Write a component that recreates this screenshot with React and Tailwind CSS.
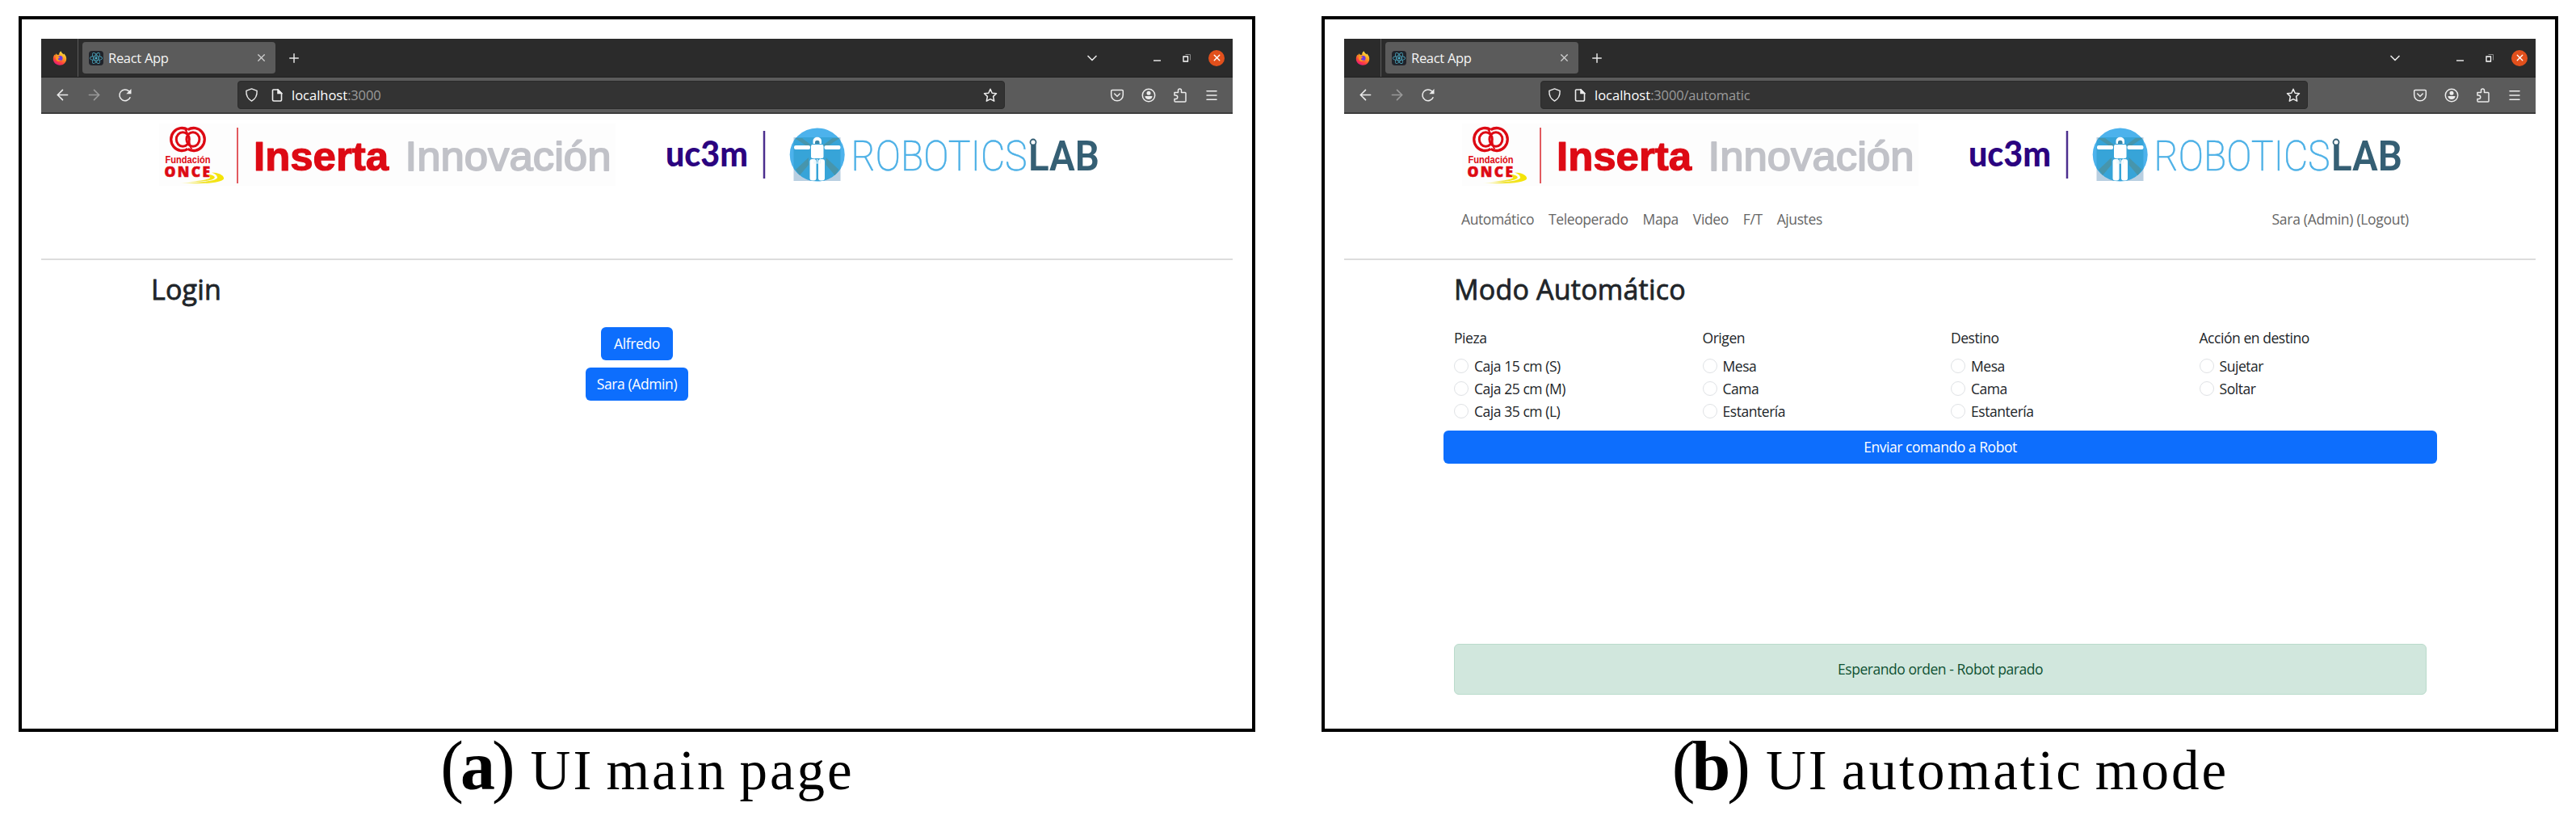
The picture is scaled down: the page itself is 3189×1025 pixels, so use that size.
import { FaReact } from 'react-icons/fa';
import { Menu, Plus, X, ChevronDown, ArrowLeft, ArrowRight } from 'lucide-react';

const navItems = ['Automático', 'Teleoperado', 'Mapa', 'Video', 'F/T', 'Ajustes'];

const commandGroups = [
  { title: 'Pieza', name: 'piece', options: ['Caja 15 cm (S)', 'Caja 25 cm (M)', 'Caja 35 cm (L)'] },
  { title: 'Origen', name: 'origin', options: ['Mesa', 'Cama', 'Estantería'] },
  { title: 'Destino', name: 'target', options: ['Mesa', 'Cama', 'Estantería'] },
  { title: 'Acción en destino', name: 'action', options: ['Sujetar', 'Soltar'] },
];

function FirefoxIcon({ id }) {
  return (
    <svg viewBox="0 0 18 18" className="w-[18px] h-[18px]">
      <defs>
        <linearGradient id={id} x1="0.8" y1="0" x2="0.3" y2="1">
          <stop offset="0" stopColor="#fff04a" />
          <stop offset="0.45" stopColor="#ff9a1f" />
          <stop offset="0.75" stopColor="#ff4040" />
          <stop offset="1" stopColor="#e3177f" />
        </linearGradient>
      </defs>
      <path
        d="M10.4 0.3c.4 1.8 2.3 2.7 3.2 4.3l.4-1.3c2 1.8 3.2 3.8 3.2 6.4 0 4.6-3.6 8-8.2 8S.8 14.3.8 9.8c0-2.3.9-4 1.7-5.4l.6 1.3c.5-1.3 1-1.9 1.7-2.4l.6 1.5c1.2-.2 2-.1 2.8.3C8 3.2 8.8 1.3 10.4.3z"
        fill={`url(#${id})`}
      />
      <circle cx="9.5" cy="9" r="3.1" fill="#6b3be0" />
      <path d="M4.5 7.2c1.600-.7 3 .1 4.600.6-.3 1.200-1.800 1.200-2.300 2.200.4 1.500 2 1.900 3.700 1.200-1 2-4.300 2.500-5.600.3-.9-1.500-.9-3-.4-4.300z" fill="#ff9a1f" />
    </svg>
  );
}

function TabBar({ id }) {
  return (
    <div className="flex items-center h-12 bg-[#2b2b2b] border-b border-[#202020] text-[#e6e6e6]">
      <div className="flex items-center justify-center w-[46px] h-full shrink-0 border-r border-[#5a5a5a]">
        <FirefoxIcon id={id} />
      </div>
      <div className="flex items-center ml-[5px] w-[239px] h-[39px] rounded bg-[#5b5b5b] pl-2 pr-[10px]">
        <span className="flex items-center justify-center w-[18px] h-[18px] rounded-sm bg-[#20232a]">
          <FaReact className="w-4 h-4 text-[#4fb3cc]" />
        </span>
        <span className="ml-[6px] mt-px text-[16.5px] leading-6 tracking-[-0.3px] text-[#f5f5f5]">React App</span>
        <X className="ml-auto w-[15px] h-[15px] text-[#d0d0d0]" strokeWidth={2} />
      </div>
      <Plus className="ml-[14px] w-[18px] h-[18px]" strokeWidth={2} />
      <div className="flex items-center ml-auto pr-[10px]">
        <ChevronDown className="w-5 h-5" strokeWidth={2} />
        <span className="ml-[66px] mt-[6px] w-[9px] h-[2px] bg-[#b5b5b5]" />
        <svg viewBox="0 0 10 10" className="ml-[27px] mt-[1px] w-[10px] h-[10px]" fill="none">
          <path d="M3.5.5H9.5V7.5" stroke="#8a8a8a" />
          <path d="M1 3h5.5v6H1z" stroke="#fff" strokeWidth="1.3" />
        </svg>
        <span className="flex items-center justify-center ml-[22px] w-5 h-5 rounded-full bg-[#e2501c]">
          <X className="w-[13px] h-[13px] text-white" strokeWidth={2.5} />
        </span>
      </div>
    </div>
  );
}

function AddressBar({ path }) {
  return (
    <div className="flex items-center h-[45px] bg-[#5b5b5b] border-b-2 border-b-[#3c3c3c] text-[#ececec]">
      <ArrowLeft className="ml-4 w-[21px] h-[21px] shrink-0" strokeWidth={1.8} />
      <ArrowRight className="ml-[18px] w-[21px] h-[21px] shrink-0 text-[#9a9a9a]" strokeWidth={1.8} />
      <svg viewBox="0 0 18 18" className="ml-[19px] w-[18px] h-[18px] shrink-0" fill="none" stroke="currentColor" strokeWidth="1.5">
        <path d="M15.3 11.2A6.9 6.9 0 1 1 13.8 4" />
        <path d="M16.5 1v6.2h-6.2z" fill="currentColor" stroke="none" />
      </svg>
      <div className="flex items-center ml-[130px] w-[950px] h-[35px] rounded bg-[#333333] border border-[#2b2b2b] px-[8px]">
        <svg viewBox="0 0 18 18" className="w-[17px] h-[17px]" fill="none" stroke="currentColor" strokeWidth="1.5">
          <path d="M9 1 16 3.6C16.3 9.5 13.8 14.5 9 17 4.2 14.5 1.7 9.5 2 3.6z" strokeLinejoin="round" />
        </svg>
        <svg viewBox="0 0 14 16" className="ml-4 w-[14px] h-[16px]" fill="none" stroke="currentColor" strokeWidth="1.6">
          <path d="M2.5 1H8l4.5 4.5V13.5a1.5 1.5 0 0 1-1.5 1.5H3A1.5 1.5 0 0 1 1.5 13.5V2a1 1 0 0 1 1-1z" />
          <path d="M8 1v4.5h4.5z" fill="currentColor" />
        </svg>
        <span className="ml-[11px] text-[16.5px] leading-6 text-white">
          localhost<span className="text-[#9b9b9b] tracking-[-0.15px]">{path}</span>
        </span>
        <svg viewBox="0 0 18 18" className="ml-auto w-[18px] h-[18px]" fill="none" stroke="currentColor" strokeWidth="1.5" strokeLinejoin="round">
          <path d="M9 1.3l2.2 4.9 5.3.6-3.9 3.6 1.1 5.8L9 13.7l-4.7 2.5 1.1-5.8L1.5 6.8l5.3-.6z" />
        </svg>
      </div>
      <div className="flex items-center gap-[21px] ml-auto pr-[17px]">
        <svg viewBox="0 0 18 18" className="w-[18px] h-[18px]" fill="none" stroke="currentColor" strokeWidth="1.5" strokeLinecap="round">
          <path d="M3 2.5h12a1.3 1.3 0 0 1 1.3 1.3V8.5a7.3 7.3 0 0 1-14.6 0V3.8A1.3 1.3 0 0 1 3 2.5z" />
          <path d="M5.7 7 9 10.3 12.3 7" />
        </svg>
        <svg viewBox="0 0 18 18" className="w-[18px] h-[18px]" fill="none">
          <circle cx="9" cy="9" r="7.7" stroke="currentColor" strokeWidth="1.5" />
          <circle cx="9" cy="6.3" r="2.5" fill="currentColor" />
          <path d="M4.5 10h9c0 2.6-2 4-4.5 4s-4.5-1.4-4.5-4z" fill="currentColor" />
        </svg>
        <svg viewBox="0 0 18 18" className="w-[18px] h-[18px]" fill="none" stroke="currentColor" strokeWidth="1.5" strokeLinejoin="round">
          <path d="M2 5.5h4.5V3a2 2 0 0 1 4 0v2.5H15a1 1 0 0 1 1 1V16a1 1 0 0 1-1 1H3a1 1 0 0 1-1-1v-2.5h1.5a2 2 0 0 0 0-4.5H2z" />
        </svg>
        <Menu className="w-[18px] h-[18px]" strokeWidth={2} />
      </div>
    </div>
  );
}

function InsertaLogo({ id }) {
  return (
    <svg viewBox="197 149 570 82" className="w-[570px] h-[82px] shrink-0">
      <defs>
        <linearGradient id={id} x1="0" y1="0" x2="1" y2="0">
          <stop offset="0" stopColor="#f3e62a" stopOpacity="0.1" />
          <stop offset="0.5" stopColor="#f0e33a" />
          <stop offset="1" stopColor="#f5e400" />
        </linearGradient>
      </defs>
      <rect x="197" y="153" width="565" height="77" fill="#fdfdfd" />
      <g fill="none" stroke="#dd0a14">
        <path d="M232.5 160.7A13.5 14 0 1 0 232.5 184.3" strokeWidth="3.3" />
        <path d="M232.5 160.7A13.5 14 0 1 1 232.5 184.3" strokeWidth="3.3" />
        <ellipse cx="226.3" cy="172.5" rx="8" ry="8.8" strokeWidth="3" />
        <ellipse cx="238.9" cy="172.5" rx="8" ry="8.8" strokeWidth="3" />
        <path d="M229 160.5C235.5 165 233 181 237.5 184.5" strokeWidth="2" />
      </g>
      <g fill="#dd0a14" fontFamily="Liberation Sans" fontWeight="700">
        <text x="204.5" y="202.3" fontSize="12" textLength="56" lengthAdjust="spacingAndGlyphs">Fundación</text>
        <text x="203.5" y="219" fontSize="17.5" fontFamily="Open Sans" fontWeight="800" textLength="56.5" stroke="#dd0a14" strokeWidth="0.6">ONCE</text>
        <text x="314" y="210.5" fontSize="50" textLength="167" lengthAdjust="spacingAndGlyphs" stroke="#dd0a14" strokeWidth="1.2" strokeLinejoin="round">Inserta</text>
      </g>
      <path d="M262 213.5C270 213.5 278 217 277 221.5 274 226 252 229 222 226 246 226.5 270 224 269 219.5 268.5 216.5 266 215 262 213.5z" fill={`url(#${id})`} />
      <path d="M256 216C262 216 267 218 265.5 220.5 262 224 245 226 232 225 246 224 261 222 260 219.5 259.5 217.5 258 216.5 256 216z" fill={`url(#${id})`} />
      <path d="M294 158v69" stroke="#e25a5f" strokeWidth="2" />
      <text x="501.5" y="210.5" fontSize="50" fontFamily="Liberation Sans" textLength="255" lengthAdjust="spacingAndGlyphs" fill="#c1c2c8" stroke="#c1c2c8" strokeWidth="1.8" strokeLinejoin="round">Innovación</text>
    </svg>
  );
}

function RoboticsLabLogo({ id }) {
  return (
    <svg viewBox="822 149 560 82" className="w-[560px] h-[82px] shrink-0">
      <defs>
        <clipPath id={id}>
          <rect x="982.5" y="170" width="58" height="54" />
        </clipPath>
      </defs>
      <text x="824" y="206" fontSize="43" fontFamily="Lato" fontWeight="900" textLength="102" lengthAdjust="spacingAndGlyphs" fill="#2b0380">uc3m</text>
      <path d="M946 162v59" stroke="#4c2f8e" strokeWidth="2.5" />
      <rect x="982.5" y="170" width="58" height="54" fill="#b9cfe1" />
      <ellipse cx="1011.7" cy="191.5" rx="34" ry="33" fill="#4cb2ec" />
      <ellipse cx="1011.7" cy="191.5" rx="34" ry="33" fill="#37a4d8" clipPath={`url(#${id})`} />
      <path
        d="M984 171h9l12 9-6 1zM1039.5 171h-9l-12 9 6 1zM985 210l16-15v9l-11 13zM1038.5 210l-16-15v9l11 13z"
        fill="#4795ac"
      />
      <g fill="#fff">
        <rect x="983" y="180" width="20" height="5" rx="2" />
        <rect x="1020.5" y="180" width="20" height="5" rx="2" />
        <path d="M1006.5 178v-3.5c0-6.5 10.5-6.5 10.5 0v3.5z" />
        <rect x="1004" y="179" width="15.5" height="17" rx="2" />
        <rect x="1002.5" y="197" width="8" height="26.5" rx="3" />
        <rect x="1013" y="197" width="8" height="26.5" rx="3" />
      </g>
      <path d="M1009 178v-2c0-3 5.5-3 5.5 0v2z" fill="#3b87a8" />
      <path d="M1008 196.5v5.5h7.5v-5.5M1011.7 197v5" fill="none" stroke="#e9f6fc" strokeWidth="1.2" />
      <text transform="translate(1053.5 210.5) scale(0.905 1)" fontSize="51.5" fontFamily="Roboto" fontWeight="200" fill="#4cb0e6" stroke="#4cb0e6" strokeWidth="0.4">ROBOTICS</text>
      <text x="1273" y="210.5" fontSize="51.5" fontFamily="Roboto" fontWeight="600" textLength="88" lengthAdjust="spacingAndGlyphs" fill="#355f74">LAB</text>
      <circle cx="1279" cy="176" r="3.5" fill="#fff" stroke="#355f74" strokeWidth="1.8" />
    </svg>
  );
}

function Header({ id, user }) {
  return (
    <header className="h-[181px] border-b-2 border-[#dddddd]">
      <div className="flex gap-[55px] pt-2 pl-[146px]">
        <InsertaLogo id={`${id}-swoosh`} />
        <RoboticsLabLogo id={`${id}-square`} />
      </div>
      {user && (
        <nav className="flex gap-[18px] mt-[28px] ml-[145px] w-[1173px] text-[17.5px] leading-6 tracking-[-0.4px] text-[#666666]">
          {navItems.map((item) => (
            <a key={item} href="#">{item}</a>
          ))}
          <a href="#" className="ml-auto tracking-[-0.3px]">{user} (Logout)</a>
        </nav>
      )}
    </header>
  );
}

function Browser({ id, path, user, children }) {
  return (
    <div className="w-[1531px] h-[886px] border-4 border-black p-6">
      <div className="font-['Open_Sans',sans-serif] text-[#212529]">
        <TabBar id={`${id}-firefox`} />
        <AddressBar path={path} />
        <Header id={id} user={user} />
        <main className="pt-4 pl-[136px]">{children}</main>
      </div>
    </div>
  );
}

function Title({ children }) {
  return (
    <h2 className="pt-px text-[34px] leading-[39px] tracking-[0.2px] [-webkit-text-stroke:0.8px_#212529]">
      {children}
    </h2>
  );
}

function Login() {
  return (
    <>
      <Title>Login</Title>
      <div className="flex flex-col items-center gap-[9px] mt-[27px] mr-[136px] text-[17.5px] tracking-[-0.4px] text-white">
        <button className="w-[89px] h-[41px] rounded-md bg-[#0d6efd]">Alfredo</button>
        <button className="w-[127px] h-[41px] rounded-md bg-[#0d6efd]">Sara (Admin)</button>
      </div>
    </>
  );
}

function Automatic() {
  return (
    <div className="text-[17.5px] tracking-[-0.45px]">
      <Title>Modo Automático</Title>
      <div className="grid grid-cols-4 w-[1230px] mt-7">
        {commandGroups.map((group) => (
          <div key={group.name}>
            <p className="mb-[9px] leading-6">{group.title}</p>
            {group.options.map((option) => (
              <label key={option} className="flex items-center h-7">
                <input
                  type="radio"
                  name={group.name}
                  className="appearance-none w-[18px] h-[18px] rounded-full border border-[#dfe2e5]"
                />
                <span className="ml-[7px]">{option}</span>
              </label>
            ))}
          </div>
        ))}
      </div>
      <button className="block -ml-[13px] mt-[10px] w-[1230px] h-[41px] rounded-md bg-[#0d6efd] text-white">
        Enviar comando a Robot
      </button>
      <div className="flex items-center justify-center mt-[223px] w-[1204px] h-[63px] rounded-md border border-[#badbcc] bg-[#d1e7dd] text-[#0f5132]">
        Esperando orden - Robot parado
      </div>
    </div>
  );
}

function Caption({ letter, words }) {
  return (
    <figcaption className="flex items-baseline justify-center gap-[15px] -mt-px ml-[26px] whitespace-nowrap font-['Liberation_Serif',serif] text-[69px] leading-none tracking-[3px] text-black">
      <span className="mr-[8px] text-[86px] tracking-[-4px]">
        (<b>{letter}</b>)
      </span>
      {words.map((word) => (
        <span key={word}>{word}</span>
      ))}
    </figcaption>
  );
}

export default function App() {
  return (
    <div className="flex gap-[82px] w-[3189px] h-[1025px] overflow-hidden bg-white pt-5 pl-[23px]">
      <figure>
        <Browser id="login" path=":3000">
          <Login />
        </Browser>
        <Caption letter="a" words={['UI', 'main', 'page']} />
      </figure>
      <figure>
        <Browser id="auto" path=":3000/automatic" user="Sara (Admin)">
          <Automatic />
        </Browser>
        <Caption letter="b" words={['UI', 'automatic', 'mode']} />
      </figure>
    </div>
  );
}
